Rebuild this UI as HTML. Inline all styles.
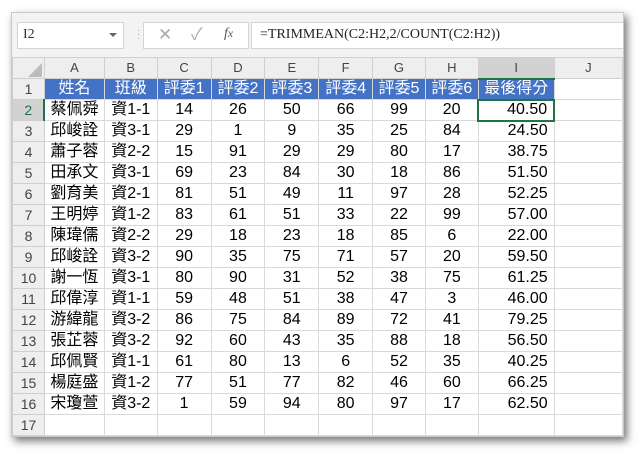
<!DOCTYPE html>
<html><head><meta charset="utf-8"><style>
body{margin:0;width:642px;height:455px;background:#fff;position:relative;overflow:hidden;font-family:"Liberation Sans","Noto Sans CJK TC",sans-serif}
.win{position:absolute;left:11px;top:12px;width:611px;height:423px;background:#f3f3f3;box-shadow:3px 4px 8px rgba(0,0,0,.55);border:1px solid #c8c8c8;overflow:hidden}
.box{position:absolute;background:#fff;border:1px solid #d4d4d4;top:9px;height:25px}
table{position:absolute;left:0;top:44px;border-collapse:collapse;table-layout:fixed}
td{height:20px;line-height:18px;border:1px solid #d9d9d9;padding:0;font-size:16px;text-align:center;background:#fff;color:#000;white-space:nowrap;overflow:hidden;box-sizing:border-box}
tr{height:21px}
tr.h td{background:#eeeeee;color:#444;font-size:13px;border-color:#cfcfcf}
td.r{background:#eeeeee;color:#444;font-size:14px;border-color:#cfcfcf}
tr.t td.d{background:#4472c4;color:#fff}
td.n{text-align:right;padding-right:6px}
</style></head><body>
<div class="win">
<div class="box" style="left:5px;width:105px"><span style="position:absolute;left:5px;top:4px;font-size:14px;color:#333;font-family:'Liberation Serif',serif">I2</span><span style="position:absolute;right:6px;top:10px;border:4px solid transparent;border-top:4px solid #666"></span></div>
<div style="position:absolute;left:125px;top:16px;color:#aaa;font-size:10px;line-height:4px">·<br>·<br>·</div>
<div class="box" style="left:131px;width:104px"><span style="position:absolute;left:14px;top:2px;color:#aaa;font-size:17px;line-height:20px">✕</span><span style="position:absolute;left:47px;top:2px;color:#aaa;font-size:17px;line-height:20px">✓</span><span style="position:absolute;left:80px;top:3px;color:#555;font-size:14px;font-style:italic;font-family:'Liberation Serif',serif">f<small>x</small></span></div>
<div class="box" style="left:239px;width:372px;border-right:none"><span style="position:absolute;left:8px;top:4px;font-size:14px;color:#222;font-family:'Liberation Serif',serif">=TRIMMEAN(C2:H2,2/COUNT(C2:H2))</span></div>
<table>
<colgroup><col style="width:32px"><col style="width:60px"><col style="width:53px"><col style="width:54px"><col style="width:54px"><col style="width:54px"><col style="width:54px"><col style="width:53px"><col style="width:53px"><col style="width:76px"><col style="width:69px"></colgroup>
<tr class="h"><td><svg width="14" height="14" style="display:block;margin:4px 0 0 15px"><path d="M14 0V14H0Z" fill="#bbb"/></svg></td><td>A</td><td>B</td><td>C</td><td>D</td><td>E</td><td>F</td><td>G</td><td>H</td><td style="background:#d2d2d2;border-bottom:2px solid #217346">I</td><td>J</td></tr>
<tr class="t"><td class="r">1</td><td class="d">姓名</td><td class="d">班級</td><td class="d">評委1</td><td class="d">評委2</td><td class="d">評委3</td><td class="d">評委4</td><td class="d">評委5</td><td class="d">評委6</td><td class="d">最後得分</td><td></td></tr>
<tr><td class="r" style="background:#d2d2d2;border-right:2px solid #217346;color:#217346">2</td><td>蔡佩舜</td><td>資1-1</td><td>14</td><td>26</td><td>50</td><td>66</td><td>99</td><td>20</td><td class="n" style="border:2px solid #217346">40.50</td><td></td></tr>
<tr><td class="r">3</td><td>邱峻詮</td><td>資3-1</td><td>29</td><td>1</td><td>9</td><td>35</td><td>25</td><td>84</td><td class="n">24.50</td><td></td></tr>
<tr><td class="r">4</td><td>蕭子蓉</td><td>資2-2</td><td>15</td><td>91</td><td>29</td><td>29</td><td>80</td><td>17</td><td class="n">38.75</td><td></td></tr>
<tr><td class="r">5</td><td>田承文</td><td>資3-1</td><td>69</td><td>23</td><td>84</td><td>30</td><td>18</td><td>86</td><td class="n">51.50</td><td></td></tr>
<tr><td class="r">6</td><td>劉育美</td><td>資2-1</td><td>81</td><td>51</td><td>49</td><td>11</td><td>97</td><td>28</td><td class="n">52.25</td><td></td></tr>
<tr><td class="r">7</td><td>王明婷</td><td>資1-2</td><td>83</td><td>61</td><td>51</td><td>33</td><td>22</td><td>99</td><td class="n">57.00</td><td></td></tr>
<tr><td class="r">8</td><td>陳瑋儒</td><td>資2-2</td><td>29</td><td>18</td><td>23</td><td>18</td><td>85</td><td>6</td><td class="n">22.00</td><td></td></tr>
<tr><td class="r">9</td><td>邱峻詮</td><td>資3-2</td><td>90</td><td>35</td><td>75</td><td>71</td><td>57</td><td>20</td><td class="n">59.50</td><td></td></tr>
<tr><td class="r">10</td><td>謝一恆</td><td>資3-1</td><td>80</td><td>90</td><td>31</td><td>52</td><td>38</td><td>75</td><td class="n">61.25</td><td></td></tr>
<tr><td class="r">11</td><td>邱偉淳</td><td>資1-1</td><td>59</td><td>48</td><td>51</td><td>38</td><td>47</td><td>3</td><td class="n">46.00</td><td></td></tr>
<tr><td class="r">12</td><td>游緯龍</td><td>資3-2</td><td>86</td><td>75</td><td>84</td><td>89</td><td>72</td><td>41</td><td class="n">79.25</td><td></td></tr>
<tr><td class="r">13</td><td>張芷蓉</td><td>資3-2</td><td>92</td><td>60</td><td>43</td><td>35</td><td>88</td><td>18</td><td class="n">56.50</td><td></td></tr>
<tr><td class="r">14</td><td>邱佩賢</td><td>資1-1</td><td>61</td><td>80</td><td>13</td><td>6</td><td>52</td><td>35</td><td class="n">40.25</td><td></td></tr>
<tr><td class="r">15</td><td>楊庭盛</td><td>資1-2</td><td>77</td><td>51</td><td>77</td><td>82</td><td>46</td><td>60</td><td class="n">66.25</td><td></td></tr>
<tr><td class="r">16</td><td>宋瓊萱</td><td>資3-2</td><td>1</td><td>59</td><td>94</td><td>80</td><td>97</td><td>17</td><td class="n">62.50</td><td></td></tr>
<tr><td class="r">17</td><td></td><td></td><td></td><td></td><td></td><td></td><td></td><td></td><td></td><td></td></tr>
</table>
</div>
</body></html>
